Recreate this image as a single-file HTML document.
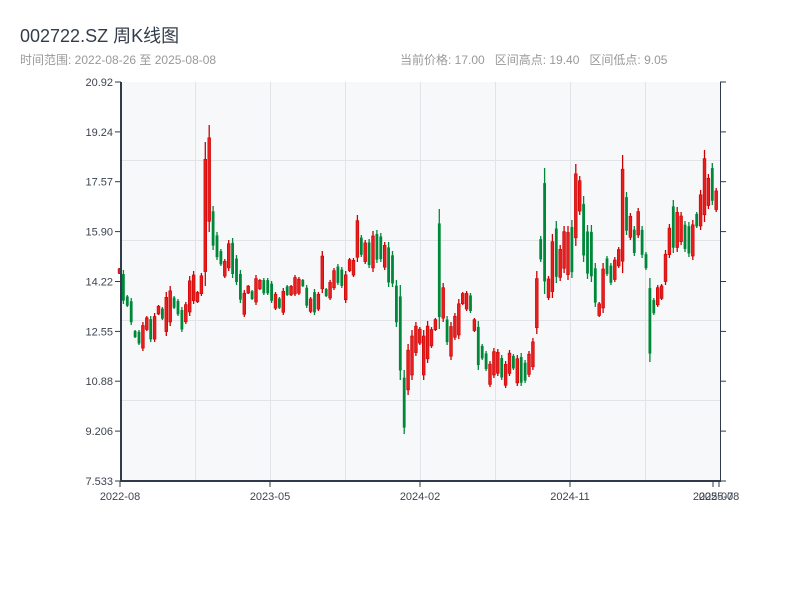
<!DOCTYPE html>
<html><head><meta charset="utf-8"><style>
body{margin:0;width:800px;height:600px;background:#fff;overflow:hidden;font-family:"Liberation Sans","Noto Sans CJK SC",sans-serif}
.t{position:absolute;left:20px;top:22px;font-size:18px;color:#333d4a}
.s{position:absolute;top:51px;font-size:12px;color:#999}
</style></head><body>
<div class="t">002722.SZ 周K线图</div>
<div class="s" style="left:20px">时间范围: 2022-08-26 至 2025-08-08</div>
<div class="s" style="left:400px">当前价格: 17.00&nbsp;&nbsp;&nbsp;区间高点: 19.40&nbsp;&nbsp;&nbsp;区间低点: 9.05</div>
<svg id="c" width="800" height="600" style="position:absolute;left:0;top:0" font-family="Liberation Sans, sans-serif" font-size="11">
<rect x="121" y="82" width="599" height="399" fill="#f7f8fa"/>
<g stroke="#e1e3e8" stroke-width="1">
<line x1="121" x2="720" y1="160.5" y2="160.5"/><line x1="121" x2="720" y1="240.5" y2="240.5"/><line x1="121" x2="720" y1="320.5" y2="320.5"/><line x1="121" x2="720" y1="400.5" y2="400.5"/>
<line y1="82" y2="481" x1="195.5" x2="195.5"/><line y1="82" y2="481" x1="270.5" x2="270.5"/><line y1="82" y2="481" x1="345.5" x2="345.5"/><line y1="82" y2="481" x1="420.5" x2="420.5"/><line y1="82" y2="481" x1="495.5" x2="495.5"/><line y1="82" y2="481" x1="570.5" x2="570.5"/><line y1="82" y2="481" x1="645.5" x2="645.5"/>
</g>
<g id="k"></g>
<g stroke="#2f3b4b" stroke-width="2"><line x1="121" x2="121" y1="82" y2="482"/><line x1="120" x2="721" y1="481" y2="481"/></g>
<line x1="720.5" x2="720.5" y1="82" y2="481" stroke="#2f3b4b" stroke-width="1"/>
<g id="ax" fill="#3d4450"></g>
</svg>
<script>
var d=[[268,274,1],[270,304,0],[295,307,0],[298,325,0],[330,338,0],[330,345,0],[322,351,1],[316,331,1],[316,342,0],[313,342,1],[305,315,1],[307,320,0],[292,336,1],[286,326,1],[296,309,0],[299,316,0],[307,332,0],[302,324,1],[276,316,1],[271,304,1],[291,303,1],[273,296,1],[142,286,1],[125,232,1],[206,250,0],[232,260,0],[249,266,0],[259,278,1],[240,271,1],[238,278,0],[255,285,0],[270,303,0],[290,317,1],[285,294,1],[290,300,0],[275,305,1],[279,290,1],[278,295,0],[278,295,0],[281,303,0],[292,310,1],[297,309,0],[288,315,1],[285,296,0],[285,296,1],[275,296,1],[277,295,1],[279,287,0],[285,308,0],[297,313,1],[289,315,0],[292,311,1],[251,293,1],[288,297,0],[280,300,1],[268,290,1],[264,285,0],[267,288,0],[271,303,1],[258,272,1],[258,277,1],[215,262,1],[235,257,0],[240,264,1],[239,268,0],[231,272,1],[230,263,0],[233,262,0],[242,270,1],[242,287,0],[251,287,0],[280,327,0],[285,380,0],[370,434,0],[344,395,1],[330,380,1],[322,356,1],[327,345,1],[330,380,1],[321,363,1],[327,348,1],[318,331,1],[209,329,0],[283,322,1],[316,345,0],[322,360,1],[313,340,1],[299,339,1],[292,305,1],[291,311,1],[293,313,0],[318,332,1],[321,370,0],[344,360,0],[351,371,0],[361,387,1],[348,378,1],[349,376,1],[355,380,0],[361,388,1],[350,376,1],[354,370,0],[355,386,1],[353,386,0],[360,383,0],[351,377,1],[338,370,1],[271,334,1],[236,262,0],[168,294,0],[276,300,1],[234,298,1],[221,283,0],[245,281,1],[226,273,1],[226,280,1],[220,278,0],[164,246,1],[176,215,1],[196,262,0],[225,279,0],[225,282,0],[263,307,0],[302,317,1],[263,313,1],[256,276,0],[263,285,0],[257,282,1],[247,268,1],[155,273,1],[192,235,0],[213,240,1],[226,256,0],[208,238,1],[226,258,0],[252,270,0],[278,362,0],[298,315,0],[285,307,1],[284,300,1],[250,285,1],[224,258,1],[200,253,0],[207,252,1],[212,245,1],[221,252,0],[222,257,0],[220,260,1],[212,228,0],[190,230,1],[150,222,1],[174,209,1],[163,205,0],[188,212,1]];
var k=document.getElementById('k'),h='';
d.forEach(function(c,i){var x=119.5+i*3.9,hi=c[0],lo=c[1],r=lo-hi,bt=hi+r*0.12,bb=lo-r*0.1;
var col=c[2]?'#cc0000':'#00883a';
h+='<line x1="'+x+'" x2="'+x+'" y1="'+hi+'" y2="'+lo+'" stroke="'+col+'" stroke-width="1.3"/>';
h+='<rect x="'+(x-1.4)+'" y="'+bt+'" width="2.8" height="'+Math.max(1,bb-bt)+'" fill="'+(c[2]?'#e61e1e':col)+'" stroke="'+col+'" stroke-width="'+(c[2]?0.6:0)+'"/>';});
k.innerHTML=h;
var a='',ly=[['20.92',82],['19.24',131.9],['17.57',181.7],['15.90',231.6],['14.22',281.5],['12.55',331.4],['10.88',381.2],['9.206',431.1],['7.533',481]];
ly.forEach(function(l){a+='<text x="113" y="'+(l[1]+4)+'" text-anchor="end">'+l[0]+'</text><line x1="115" x2="121" y1="'+l[1]+'" y2="'+l[1]+'" stroke="#2f3b4b"/><line x1="720" x2="726" y1="'+l[1]+'" y2="'+l[1]+'" stroke="#2f3b4b"/>';});
[['2022-08',120],['2023-05',270],['2024-02',420],['2024-11',570],['2025-07',713],['2025-08',719]].forEach(function(l){a+='<text x="'+l[1]+'" y="500" text-anchor="middle">'+l[0]+'</text><line x1="'+l[1]+'" x2="'+l[1]+'" y1="481" y2="487" stroke="#2f3b4b"/>';});
document.getElementById('ax').innerHTML=a;
</script>
</body></html>
